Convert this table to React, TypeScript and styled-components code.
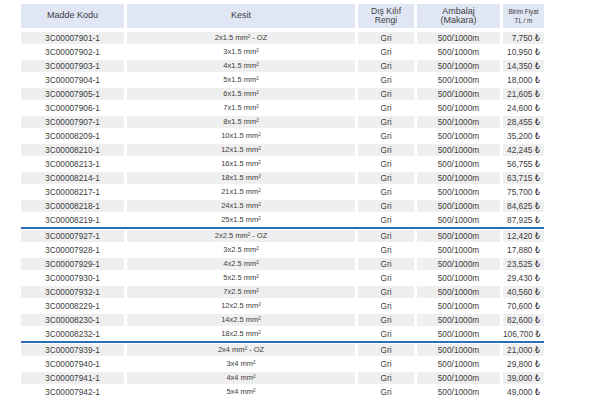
import React from "react";
import styled, { createGlobalStyle } from "styled-components";

const Global = createGlobalStyle`
  html, body { margin: 0; padding: 0; background: #ffffff; }
  body { font-family: "Liberation Sans", Arial, "DejaVu Sans", sans-serif; color: #3a3a3a; }
`;

const cols = "103px 228px 56px 83px 41px";

const Table = styled.div`
  width: 523px;
  margin: 4px 0 0 21px;
  display: flex;
  flex-direction: column;
`;

const HeaderRow = styled.div`
  display: grid;
  grid-template-columns: ${cols};
  column-gap: 3px;
  height: 24px;
  margin-bottom: 3px;
`;

const HeadCell = styled.div<{ $size?: number; $lh?: number }>`
  background: #e1e6f4;
  display: flex;
  flex-direction: column;
  align-items: center;
  justify-content: center;
  font-size: ${(p) => p.$size ?? 9}px;
  line-height: ${(p) => p.$lh ?? (p.$size ?? 9) + 0.5}px;
  color: #404040;
  text-align: center;
`;

const Section = styled.div<{ $divider?: boolean }>`
  display: flex;
  flex-direction: column;
  border-top: ${(p) => (p.$divider ? "2px solid #2a6fb9" : "none")};
`;

const Row = styled.div<{ $shade: boolean }>`
  display: grid;
  grid-template-columns: ${cols};
  column-gap: 3px;
  height: 14px;
  padding: 1px 0;
  box-sizing: border-box;
  & > div {
    background: ${(p) => (p.$shade ? "#efefef" : "transparent")};
  }
`;

const Cell = styled.div<{ $align?: "center" | "right"; $size?: number }>`
  font-size: ${(p) => p.$size ?? 8.3}px;
  line-height: 12px;
  text-align: ${(p) => p.$align ?? "center"};
  padding-right: ${(p) => (p.$align === "right" ? "4px" : "0")};
  white-space: nowrap;
  color: #3c3c3c;
`;

type Item = [string, string, string];

const sections: Item[][] = [
  [
    ["3C00007901-1", "2x1.5 mm² - OZ", "7,750"],
    ["3C00007902-1", "3x1.5 mm²", "10,950"],
    ["3C00007903-1", "4x1.5 mm²", "14,350"],
    ["3C00007904-1", "5x1.5 mm²", "18,000"],
    ["3C00007905-1", "6x1.5 mm²", "21,605"],
    ["3C00007906-1", "7x1.5 mm²", "24,600"],
    ["3C00007907-1", "8x1.5 mm²", "28,455"],
    ["3C00008209-1", "10x1.5 mm²", "35,200"],
    ["3C00008210-1", "12x1.5 mm²", "42,245"],
    ["3C00008213-1", "16x1.5 mm²", "56,755"],
    ["3C00008214-1", "18x1.5 mm²", "63,715"],
    ["3C00008217-1", "21x1.5 mm²", "75,700"],
    ["3C00008218-1", "24x1.5 mm²", "84,625"],
    ["3C00008219-1", "25x1.5 mm²", "87,925"],
  ],
  [
    ["3C00007927-1", "2x2.5 mm² - OZ", "12,420"],
    ["3C00007928-1", "3x2.5 mm²", "17,880"],
    ["3C00007929-1", "4x2.5 mm²", "23,525"],
    ["3C00007930-1", "5x2.5 mm²", "29,430"],
    ["3C00007932-1", "7x2.5 mm²", "40,560"],
    ["3C00008229-1", "12x2.5 mm²", "70,600"],
    ["3C00008230-1", "14x2.5 mm²", "82,600"],
    ["3C00008232-1", "18x2.5 mm²", "106,700"],
  ],
  [
    ["3C00007939-1", "2x4 mm² - OZ", "21,000"],
    ["3C00007940-1", "3x4 mm²", "29,800"],
    ["3C00007941-1", "4x4 mm²", "39,000"],
    ["3C00007942-1", "5x4 mm²", "49,000"],
  ],
];

export default function App() {
  return (
    <>
      <Global />
      <Table>
        <HeaderRow>
          <HeadCell>Madde Kodu</HeadCell>
          <HeadCell>Kesit</HeadCell>
          <HeadCell $size={8.6}>
            <span>Dış Kılıf</span>
            <span>Rengi</span>
          </HeadCell>
          <HeadCell $size={9}>
            <span>Ambalaj</span>
            <span>(Makara)</span>
          </HeadCell>
          <HeadCell $size={6.4} $lh={9}>
            <span>Birim Fiyat</span>
            <span>TL / m</span>
          </HeadCell>
        </HeaderRow>
        {sections.map((rows, si) => (
          <Section key={si} $divider={si > 0}>
            {rows.map(([code, kesit, price], ri) => (
              <Row key={code} $shade={ri % 2 === 0}>
                <Cell>{code}</Cell>
                <Cell $size={7.5}>{kesit}</Cell>
                <Cell>Gri</Cell>
                <Cell>500/1000m</Cell>
                <Cell $align="right">{price} ₺</Cell>
              </Row>
            ))}
          </Section>
        ))}
      </Table>
    </>
  );
}
